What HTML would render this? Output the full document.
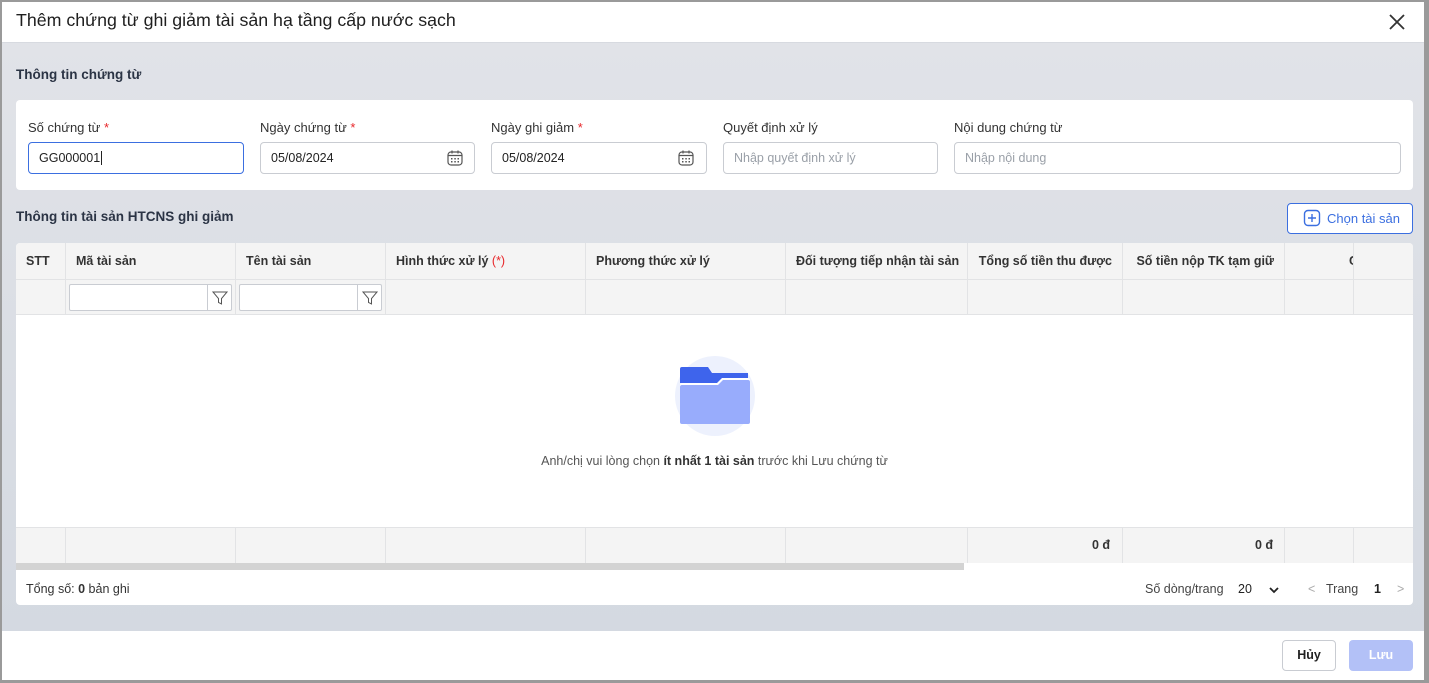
<!DOCTYPE html>
<html><head><meta charset="utf-8"><style>
*{box-sizing:border-box;margin:0;padding:0}
body{width:1429px;height:683px;position:relative;font-family:"Liberation Sans",Arial,sans-serif;background:#9a9a9a;overflow:hidden;color:#212121}
.dlg{position:absolute;left:2px;top:2px;width:1422px;height:678px;background:#fff;overflow:hidden}
.abs{position:absolute}
.hdr{left:0;top:0;width:1422px;height:41px;border-bottom:1px solid #d7dae0;background:#fff}
.body{left:0;top:41px;width:1422px;height:588px;background:linear-gradient(180deg,#e1e3e8,#d4d9e1)}
.card{background:#fff;border-radius:4px}
.lbl{font-size:13px;color:#333}
.req{color:#e8262a}
.inp{height:32px;border:1px solid #c9ccd2;border-radius:4px;font-size:12.5px;padding:0 10px;line-height:30px;color:#222;background:#fff}
.ph{color:#9aa0a8}
.th{position:absolute;top:0;height:36px;line-height:36px;font-size:12.5px;font-weight:bold;color:#333;padding-left:10px;border-right:1px solid #e2e3e5;white-space:nowrap;overflow:hidden}
.vl{position:absolute;width:1px;background:#e2e3e5}
.fi{position:absolute;top:4px;height:27px;border:1px solid #c9ccd2;background:#fff;border-radius:2px}
.fi span{position:absolute;right:0;top:0;width:24px;height:25px;border-left:1px solid #c9ccd2}
</style></head><body>
<div class="dlg">
<div class="abs hdr"><div class="abs" style="left:14px;top:8px;font-size:17.8px;color:#1f1f1f">Thêm chứng từ ghi giảm tài sản hạ tầng cấp nước sạch</div>
<svg class="abs" style="left:1386px;top:11px" width="18" height="18" viewBox="0 0 18 18"><path d="M2 2L16 16M16 2L2 16" stroke="#333" stroke-width="1.8"/></svg></div>
<div class="abs body">
<div class="abs" style="left:14px;top:24px;font-size:13.5px;font-weight:bold;color:#2b3445">Thông tin chứng từ</div>
<div class="abs card" style="left:14px;top:57px;width:1397px;height:90px">
 <div class="abs lbl" style="left:12px;top:20px">Số chứng từ <span class="req">*</span></div>
 <div class="abs inp" style="left:12px;top:42px;width:216px;border-color:#3b6fe0">GG000001<span style="border-left:1px solid #222;margin-left:1px"></span></div>
 <div class="abs lbl" style="left:244px;top:20px">Ngày chứng từ <span class="req">*</span></div>
 <div class="abs inp" style="left:244px;top:42px;width:215px">05/08/2024</div>
 <div class="abs lbl" style="left:475px;top:20px">Ngày ghi giảm <span class="req">*</span></div>
 <div class="abs inp" style="left:475px;top:42px;width:216px">05/08/2024</div>
 <div class="abs lbl" style="left:707px;top:20px">Quyết định xử lý</div>
 <div class="abs inp ph" style="left:707px;top:42px;width:215px">Nhập quyết định xử lý</div>
 <div class="abs lbl" style="left:938px;top:20px">Nội dung chứng từ</div>
 <div class="abs inp ph" style="left:938px;top:42px;width:447px">Nhập nội dung</div>
 <svg class="abs" style="left:430px;top:49px" width="18" height="18" viewBox="0 0 18 18"><rect x="2" y="3" width="14" height="13" rx="3" fill="none" stroke="#555" stroke-width="1.2"/><path d="M6 1.5v3M12 1.5v3M2 6.5h14" stroke="#555" stroke-width="1.2"/><g fill="#555"><rect x="5" y="9" width="1.5" height="1.5"/><rect x="8.3" y="9" width="1.5" height="1.5"/><rect x="11.5" y="9" width="1.5" height="1.5"/><rect x="5" y="12" width="1.5" height="1.5"/><rect x="8.3" y="12" width="1.5" height="1.5"/><rect x="11.5" y="12" width="1.5" height="1.5"/></g></svg>
 <svg class="abs" style="left:661px;top:49px" width="18" height="18" viewBox="0 0 18 18"><rect x="2" y="3" width="14" height="13" rx="3" fill="none" stroke="#555" stroke-width="1.2"/><path d="M6 1.5v3M12 1.5v3M2 6.5h14" stroke="#555" stroke-width="1.2"/><g fill="#555"><rect x="5" y="9" width="1.5" height="1.5"/><rect x="8.3" y="9" width="1.5" height="1.5"/><rect x="11.5" y="9" width="1.5" height="1.5"/><rect x="5" y="12" width="1.5" height="1.5"/><rect x="8.3" y="12" width="1.5" height="1.5"/><rect x="11.5" y="12" width="1.5" height="1.5"/></g></svg>
</div>
<div class="abs" style="left:14px;top:166px;font-size:13.5px;font-weight:bold;color:#2b3445">Thông tin tài sản HTCNS ghi giảm</div>
<div class="abs" style="left:1285px;top:160px;width:126px;height:31px;border:1px solid #3b6fe0;border-radius:4px;background:#fff;color:#3b6fe0;font-size:13px;line-height:29px;padding-left:39px">Chọn tài sản</div>
<svg class="abs" style="left:1301px;top:166px" width="18" height="18" viewBox="0 0 18 18"><rect x="1.5" y="1.5" width="15" height="15" rx="3.5" fill="none" stroke="#3b6fe0" stroke-width="1.4"/><path d="M9 5v8M5 9h8" stroke="#3b6fe0" stroke-width="1.4"/></svg>
<div class="abs card" style="left:14px;top:200px;width:1397px;height:362px;overflow:hidden">
 <div class="abs" style="left:0;top:0;width:1397px;height:72px;background:#f4f4f4;border-bottom:1px solid #e2e3e5"></div>
 <div class="abs" style="left:0;top:36px;width:1397px;height:1px;background:#e2e3e5"></div>
 <div class="th" style="left:0;width:50px">STT</div>
 <div class="th" style="left:50px;width:170px">Mã tài sản</div>
 <div class="th" style="left:220px;width:150px">Tên tài sản</div>
 <div class="th" style="left:370px;width:200px">Hình thức xử lý <span class="req" style="font-weight:normal">(*)</span></div>
 <div class="th" style="left:570px;width:200px">Phương thức xử lý</div>
 <div class="th" style="left:770px;width:182px">Đối tượng tiếp nhận tài sản</div>
 <div class="th" style="left:952px;width:155px;padding-right:10px;text-align:right">Tổng số tiền thu được</div>
 <div class="th" style="left:1107px;width:162px;padding-right:10px;text-align:right">Số tiền nộp TK tạm giữ</div>
 <div class="th" style="left:1269px;width:69px;padding-left:64px">C</div>
 <div class="vl" style="left:49px;top:37px;height:35px"></div><div class="vl" style="left:219px;top:37px;height:35px"></div><div class="vl" style="left:369px;top:37px;height:35px"></div><div class="vl" style="left:569px;top:37px;height:35px"></div><div class="vl" style="left:769px;top:37px;height:35px"></div><div class="vl" style="left:951px;top:37px;height:35px"></div><div class="vl" style="left:1106px;top:37px;height:35px"></div><div class="vl" style="left:1268px;top:37px;height:35px"></div><div class="vl" style="left:1337px;top:37px;height:35px"></div>
 <div class="fi" style="left:53px;top:41px;width:163px"><span><svg width="24" height="25" viewBox="0 0 24 25"><path d="M5 7h14l-5.5 6.5v5.5l-3-1.5v-4z" fill="none" stroke="#555" stroke-width="1"/></svg></span></div>
 <div class="fi" style="left:223px;top:41px;width:143px"><span><svg width="24" height="25" viewBox="0 0 24 25"><path d="M5 7h14l-5.5 6.5v5.5l-3-1.5v-4z" fill="none" stroke="#555" stroke-width="1"/></svg></span></div>
 <div class="abs" style="left:659px;top:113px;width:80px;height:80px;border-radius:50%;background:#edf1fd"></div>
 <svg class="abs" style="left:664px;top:122px" width="70" height="62" viewBox="0 0 70 62"><path d="M0 4a2 2 0 0 1 2-2h26l4 6h36v10H0z" fill="#3e64ec"/><path d="M0 20a2 2 0 0 1 2-2h35l5-5h26a2 2 0 0 1 2 2v42a2 2 0 0 1-2 2H2a2 2 0 0 1-2-2z" fill="#fff"/><path d="M0 22a2 2 0 0 1 2-2h36l5-5h25a2 2 0 0 1 2 2v40a2 2 0 0 1-2 2H2a2 2 0 0 1-2-2z" fill="#98acfc"/></svg>
 <div class="abs" style="left:0;top:211px;width:1397px;text-align:center;font-size:12.5px;color:#555">Anh/chị vui lòng chọn <b style="color:#333">ít nhất 1 tài sản</b> trước khi Lưu chứng từ</div>
 <div class="abs" style="left:0;top:284px;width:1397px;height:36px;background:#f4f4f4;border-top:1px solid #e2e3e5"></div>
 <div class="vl" style="left:49px;top:284px;height:36px"></div><div class="vl" style="left:219px;top:284px;height:36px"></div><div class="vl" style="left:369px;top:284px;height:36px"></div><div class="vl" style="left:569px;top:284px;height:36px"></div><div class="vl" style="left:769px;top:284px;height:36px"></div><div class="vl" style="left:951px;top:284px;height:36px"></div><div class="vl" style="left:1106px;top:284px;height:36px"></div><div class="vl" style="left:1268px;top:284px;height:36px"></div><div class="vl" style="left:1337px;top:284px;height:36px"></div>
 <div class="abs" style="left:1076px;top:295px;font-size:12.5px;font-weight:bold;color:#333">0 đ</div>
 <div class="abs" style="left:1239px;top:295px;font-size:12.5px;font-weight:bold;color:#333">0 đ</div>
 <div class="abs" style="left:0;top:320px;width:948px;height:7px;background:#d3d3d3"></div>
 <div class="abs" style="left:10px;top:339px;font-size:12.5px;color:#333">Tổng số: <b>0</b> bản ghi</div>
 <div class="abs" style="left:1129px;top:339px;font-size:12.5px;color:#444">Số dòng/trang</div>
 <div class="abs" style="left:1222px;top:339px;font-size:12.5px;color:#222">20</div>
 <svg class="abs" style="left:1252px;top:342px" width="12" height="10" viewBox="0 0 12 10"><path d="M2 3l4 4 4-4" fill="none" stroke="#222" stroke-width="1.8"/></svg>
 <div class="abs" style="left:1292px;top:339px;font-size:12.5px;color:#aaa">&lt;</div>
 <div class="abs" style="left:1310px;top:339px;font-size:12.5px;color:#444">Trang</div>
 <div class="abs" style="left:1358px;top:339px;font-size:12.5px;color:#222;font-weight:bold">1</div>
 <div class="abs" style="left:1381px;top:339px;font-size:12.5px;color:#aaa">&gt;</div>
</div>
</div>
<div class="abs" style="left:1280px;top:638px;width:54px;height:31px;border:1px solid #c9ccd2;border-radius:4px;text-align:center;line-height:29px;font-size:12.5px;font-weight:bold;color:#222">Hủy</div>
<div class="abs" style="left:1347px;top:638px;width:64px;height:31px;background:#b3c1f7;border-radius:4px;text-align:center;line-height:31px;font-size:12.5px;font-weight:bold;color:#fff">Lưu</div>
</div>
</body></html>
